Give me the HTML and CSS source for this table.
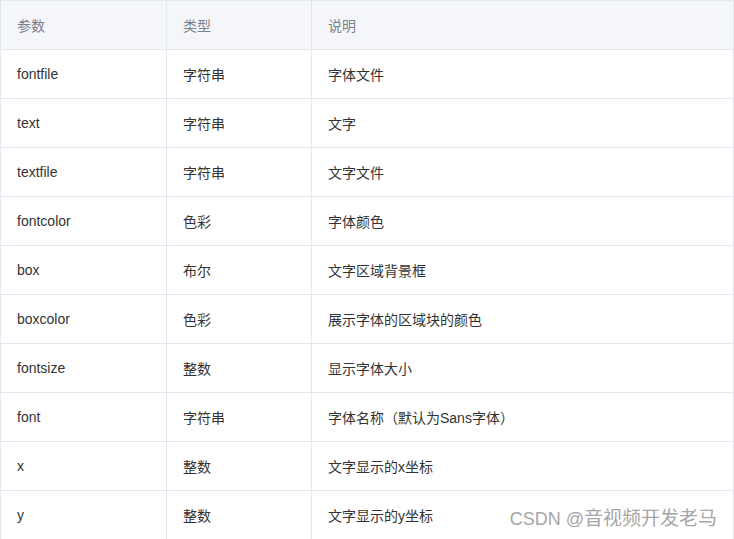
FILE: index.html
```html
<!DOCTYPE html>
<html lang="zh">
<head>
<meta charset="utf-8">
<link rel="stylesheet" href="styles.css">
</head>
<body>
<div class="wrap">
<table class="params">
  <colgroup><col class="c1"><col class="c2"><col class="c3"></colgroup>
  <thead>
    <tr><th>参数</th><th>类型</th><th>说明</th></tr>
  </thead>
  <tbody>
    <tr><td>fontfile</td><td>字符串</td><td>字体文件</td></tr>
    <tr><td>text</td><td>字符串</td><td>文字</td></tr>
    <tr><td>textfile</td><td>字符串</td><td>文字文件</td></tr>
    <tr><td>fontcolor</td><td>色彩</td><td>字体颜色</td></tr>
    <tr><td>box</td><td>布尔</td><td>文字区域背景框</td></tr>
    <tr><td>boxcolor</td><td>色彩</td><td>展示字体的区域块的颜色</td></tr>
    <tr><td>fontsize</td><td>整数</td><td>显示字体大小</td></tr>
    <tr><td>font</td><td>字符串</td><td>字体名称（默认为Sans字体）</td></tr>
    <tr><td>x</td><td>整数</td><td>文字显示的x坐标</td></tr>
    <tr><td>y</td><td>整数</td><td>文字显示的y坐标</td></tr>
  </tbody>
</table>
<div class="watermark">CSDN @<span class="wm-cjk">音视频开发老马</span></div>
</div>
</body>
</html>
```

FILE: styles.css
```css
html, body {
  margin: 0;
  padding: 0;
  background: #ffffff;
}
.wrap {
  position: relative;
  width: 734px;
  height: 539px;
  overflow: hidden;
}
.params {
  border-collapse: collapse;
  table-layout: fixed;
  width: 734px;
  font-family: "Liberation Sans", "Noto Sans CJK SC", sans-serif;
  font-size: 14px;
  color: #333333;
}
.c1 { width: 166px; }
.c2 { width: 145px; }
.params th,
.params td {
  border: 1px solid #e4e7ef;
  height: 49px;
  padding: 0 0 0 16px;
  text-align: left;
  vertical-align: middle;
  box-sizing: border-box;
  white-space: nowrap;
}
.params th {
  background: #f5f6fa;
  font-weight: normal;
  color: #7b8089;
}
.watermark {
  position: absolute;
  right: 17px;
  bottom: 9px;
  font-family: "Liberation Sans", "Noto Sans CJK SC", sans-serif;
  font-size: 18px;
  color: #a6a6a6;
  white-space: nowrap;
}
.wm-cjk {
  font-size: 19px;
}
```
